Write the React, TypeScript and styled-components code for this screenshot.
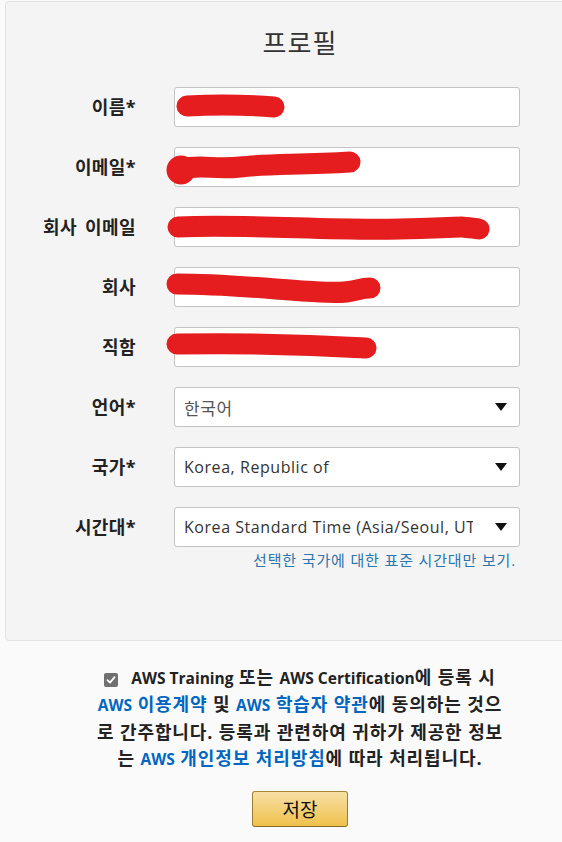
import { Fragment } from 'react'
import styled, { createGlobalStyle } from 'styled-components'

const GlobalStyle = createGlobalStyle`
  html, body {
    margin: 0;
    padding: 0;
    background: #fafafa;
    overflow: hidden;
  }

  body {
    font-family: "Open Sans", "Noto Sans CJK KR", sans-serif;
    color: #333;
  }
`

const Page = styled.div`
  position: relative;
  width: 600px;
  padding-top: 1px;
`

const Panel = styled.section`
  box-sizing: border-box;
  margin-left: 5px;
  width: 590px;
  height: 640px;
  padding-top: 25px;
  background: #f4f4f4;
  border: 1px solid #e2e2e2;
  border-radius: 4px;
`

const Title = styled.h1`
  margin: 0 0 28px;
  font-size: 26px;
  line-height: 32px;
  font-weight: 400;
  letter-spacing: 1px;
  text-align: center;
  color: #333;
`

const Form = styled.div`
  display: grid;
  grid-template-columns: 130px 346px;
  column-gap: 38px;
  row-gap: 20px;
  align-items: start;
`

const Label = styled.label`
  height: 40px;
  line-height: 40px;
  text-align: right;
  font-size: 18px;
  font-weight: 700;
  letter-spacing: 0.4px;
  word-spacing: 3px;
  white-space: nowrap;
  color: #222;
`

const Field = styled.div`
  display: flex;
  flex-direction: column;
`

const Input = styled.div`
  box-sizing: border-box;
  height: 40px;
  background: #fff;
  border: 1px solid #c4c4c4;
  border-radius: 3px;
`

const Select = styled(Input)`
  display: flex;
  align-items: center;
  padding: 0 12px 0 9px;
  gap: 22px;
  font-size: 16px;
  color: #333;
`

const SelectText = styled.span<{ $ko?: boolean }>`
  flex: 1;
  overflow: hidden;
  white-space: nowrap;
  font-size: ${({ $ko }) => ($ko ? '17px' : '16px')};
  letter-spacing: 0.55px;
  color: ${({ $ko }) => ($ko ? '#555' : '#333')};
`

const Arrow = styled.span`
  width: 0;
  height: 0;
  border-left: 6px solid transparent;
  border-right: 6px solid transparent;
  border-top: 8px solid #111;
`

const Hint = styled.a`
  margin-top: 4px;
  padding-right: 4px;
  text-align: right;
  font-size: 15px;
  line-height: 18px;
  letter-spacing: 0.85px;
  color: #2a76ad;
  text-decoration: none;
`

const Agreement = styled.p`
  width: 410px;
  margin: 23px auto 0;
  text-align: center;
  font-size: 18px;
  line-height: 26.3px;
  font-weight: 700;
  letter-spacing: 0.9px;
  color: #222;
`

// the latin words in the notice are set a little tighter than the hangul
const Latin = styled.span`
  font-size: 15.5px;
  letter-spacing: 0;
`

const Check = styled.span`
  display: inline-flex;
  align-items: center;
  justify-content: center;
  width: 14px;
  height: 14px;
  margin-right: 13px;
  vertical-align: -1px;
  background: #707070;
  border-radius: 2px;
`

const Link = styled.a`
  color: #0066c0;
  text-decoration: none;
`

const Actions = styled.div`
  display: flex;
  justify-content: center;
  margin-top: 19px;
`

const SaveButton = styled.button`
  box-sizing: border-box;
  width: 96px;
  height: 36px;
  font-family: inherit;
  font-size: 19px;
  color: #111;
  background: linear-gradient(to bottom, #f7dfa5, #f0c14b);
  border: 1px solid #a88734;
  border-color: #a88734 #9c7e31 #846a29;
  border-radius: 3px;
  cursor: pointer;
`

const Redaction = styled.svg`
  position: absolute;
  top: 0;
  left: 0;
  pointer-events: none;
`

const textFields = ['이름*', '이메일*', '회사 이메일', '회사', '직함']

function App() {
  return (
    <Page>
      <GlobalStyle />
      <Panel>
        <Title>프로필</Title>
        <Form>
          {textFields.map((label) => (
            <Fragment key={label}>
              <Label>{label}</Label>
              <Input />
            </Fragment>
          ))}
          <Label>언어*</Label>
          <Select>
            <SelectText $ko>한국어</SelectText>
            <Arrow />
          </Select>
          <Label>국가*</Label>
          <Select>
            <SelectText>Korea, Republic of</SelectText>
            <Arrow />
          </Select>
          <Label>시간대*</Label>
          <Field>
            <Select>
              <SelectText>Korea Standard Time (Asia/Seoul, UTC+09:00)</SelectText>
              <Arrow />
            </Select>
            <Hint>선택한 국가에 대한 표준 시간대만 보기.</Hint>
          </Field>
        </Form>
      </Panel>

      <Agreement>
        <Check>
          <svg width="10" height="10" viewBox="0 0 10 10">
            <path d="M1.5 5.2 L4 7.6 L8.6 2.2" fill="none" stroke="#fff" strokeWidth="1.8" strokeLinecap="round" strokeLinejoin="round" />
          </svg>
        </Check>
        <Latin>AWS Training</Latin> 또는 <Latin>AWS Certification</Latin>에 등록 시{' '}
        <Link><Latin>AWS</Latin> 이용계약</Link> 및 <Link><Latin>AWS</Latin> 학습자 약관</Link>에 동의하는
        것으로 간주합니다. 등록과 관련하여 귀하가 제공한 정보는{' '}
        <Link><Latin>AWS</Latin> 개인정보 처리방침</Link>에 따라 처리됩니다.
      </Agreement>

      <Actions>
        <SaveButton>저장</SaveButton>
      </Actions>

      <Redaction width="600" height="400" viewBox="0 0 600 400">
        <g fill="none" stroke="#e51d1f" strokeWidth="21" strokeLinecap="round" strokeLinejoin="round">
          <path d="M187 106 C 220 104, 250 105, 274 107" />
          <path d="M182 169 C 200 164, 215 170, 240 167 S 300 165, 350 162" />
          <circle cx="181" cy="170" r="4" />
          <path d="M178 227 C 250 224, 330 231, 400 229 S 460 226, 479 229" />
          <path d="M177 284 C 230 284, 280 290, 320 292 S 355 288, 370 288" />
          <path d="M177 344 C 240 343, 300 344, 366 348" />
        </g>
      </Redaction>
    </Page>
  )
}

export default App
